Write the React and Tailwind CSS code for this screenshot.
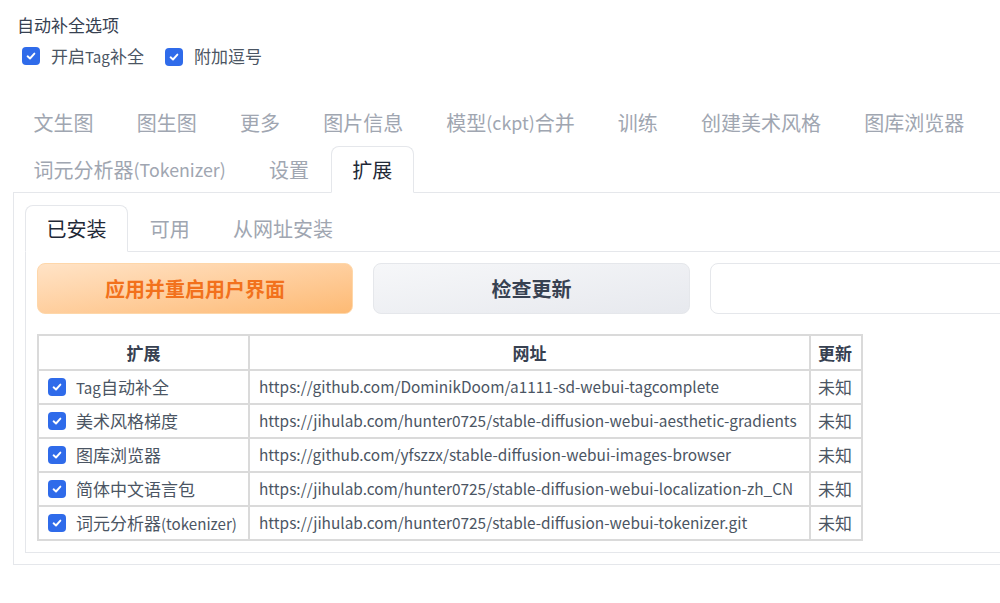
import React from "react";

const font = { fontFamily: '"Noto Sans CJK SC", "Noto Sans", sans-serif' };

function T({ children }) {
  const parts = String(children).split(/([\x00-\x7F]+)/).filter(Boolean);
  return (
    <>
      {parts.map((p, i) =>
        /^[\x00-\x7F]+$/.test(p) ? (
          <span key={i} className="text-[0.89em]">{p}</span>
        ) : (
          <React.Fragment key={i}>{p}</React.Fragment>
        )
      )}
    </>
  );
}

function Check() {
  return (
    <span className="inline-flex h-[18px] w-[18px] shrink-0 items-center justify-center rounded-[4px] bg-[#2f6bea]">
      <svg width="12" height="12" viewBox="0 0 12 12" fill="none">
        <path d="M2.6 6.3 L5 8.5 L9.4 3.6" stroke="white" strokeWidth="1.9" strokeLinecap="round" strokeLinejoin="round" />
      </svg>
    </span>
  );
}

const mainTabs1 = ["文生图", "图生图", "更多", "图片信息", "模型(ckpt)合并", "训练", "创建美术风格", "图库浏览器"];
const mainTabs2 = ["词元分析器(Tokenizer)", "设置", "扩展"];

const rows = [
  ["Tag自动补全", "https://github.com/DominikDoom/a1111-sd-webui-tagcomplete"],
  ["美术风格梯度", "https://jihulab.com/hunter0725/stable-diffusion-webui-aesthetic-gradients"],
  ["图库浏览器", "https://github.com/yfszzx/stable-diffusion-webui-images-browser"],
  ["简体中文语言包", "https://jihulab.com/hunter0725/stable-diffusion-webui-localization-zh_CN"],
  ["词元分析器(tokenizer)", "https://jihulab.com/hunter0725/stable-diffusion-webui-tokenizer.git"],
];

function Tab({ label, active }) {
  return (
    <div
      className={
        "relative flex h-[47px] items-center whitespace-nowrap px-[20.6px] text-[20px] border border-b " +
        (active
          ? "z-10 rounded-t-[8px] border-[#e5e7eb] border-b-white bg-white text-[#1f2937]"
          : "border-transparent text-[#a0a6b1]")
      }
    >
      <T>{label}</T>
    </div>
  );
}

export default function App() {
  return (
    <div className="h-[603px] w-[1000px] overflow-hidden bg-white" style={font}>
      <div className="w-[1060px]">
        <div className="pl-[17px] pt-[13px]">
          <div className="text-[17px] leading-[24px] text-[#374151]">自动补全选项</div>
          <div className="mt-[7px] flex h-[24px] items-center pl-[5px] text-[17px] text-[#4b5563]">
            <Check />
            <span className="ml-[11px]"><T>开启Tag补全</T></span>
            <span className="ml-[21px]"><Check /></span>
            <span className="ml-[11px]">附加逗号</span>
          </div>
        </div>

        <div className="ml-[13px] mt-[31px]">
          <div className="-ml-px flex">
            {mainTabs1.map((t) => (
              <Tab key={t} label={t} />
            ))}
          </div>
          <div className="-ml-px flex">
            {mainTabs2.map((t) => (
              <Tab key={t} label={t} active={t === "扩展"} />
            ))}
          </div>

          <div className="-mt-px border border-[#e5e7eb] px-[11px] pb-[11px] pt-[12px]">
            <div className="flex">
              <Tab label="已安装" active />
              <Tab label="可用" />
              <Tab label="从网址安装" />
            </div>
            <div className="-mt-px border border-[#e5e7eb] px-[11px] pb-[11px] pt-[11px]">
              <div className="flex gap-[20px]">
                <button className="h-[51px] w-[316px] shrink-0 rounded-[8px] border border-[#fed7aa] bg-gradient-to-br from-[#ffe3c6] to-[#fdba74] text-[20px] font-bold text-[#f2711c]">
                  应用并重启用户界面
                </button>
                <button className="h-[51px] w-[317px] shrink-0 rounded-[8px] border border-[#e5e7eb] bg-gradient-to-br from-[#f6f7f9] to-[#e7e9ee] text-[20px] font-bold text-[#374151]">
                  检查更新
                </button>
                <div className="h-[51px] flex-1 rounded-[8px] border border-[#e5e7eb] bg-white" />
              </div>

              <table className="mt-[20px] table-fixed border-collapse border-2 border-[#dadada] text-[17px] text-[#4b5563]">
                <colgroup>
                  <col className="w-[211px]" />
                  <col className="w-[561px]" />
                  <col className="w-[52px]" />
                </colgroup>
                <thead>
                  <tr className="h-[35px]">
                    <th className="border-2 border-[#dadada] text-center font-bold text-[#374151]">扩展</th>
                    <th className="border-2 border-[#dadada] text-center font-bold text-[#374151]">网址</th>
                    <th className="border-2 border-[#dadada] px-[7px] text-left font-bold text-[#374151]">更新</th>
                  </tr>
                </thead>
                <tbody>
                  {rows.map(([name, url]) => (
                    <tr key={name} className="h-[34px]">
                      <td className="whitespace-nowrap border-2 border-[#dadada] pl-[9px]">
                        <div className="flex items-center gap-[10px]">
                          <Check />
                          <span><T>{name}</T></span>
                        </div>
                      </td>
                      <td className="whitespace-nowrap border-2 border-[#dadada] pl-[9px] text-[15.4px]">{url}</td>
                      <td className="whitespace-nowrap border-2 border-[#dadada] pl-[7px]">未知</td>
                    </tr>
                  ))}
                </tbody>
              </table>
            </div>
          </div>
        </div>
      </div>
    </div>
  );
}
